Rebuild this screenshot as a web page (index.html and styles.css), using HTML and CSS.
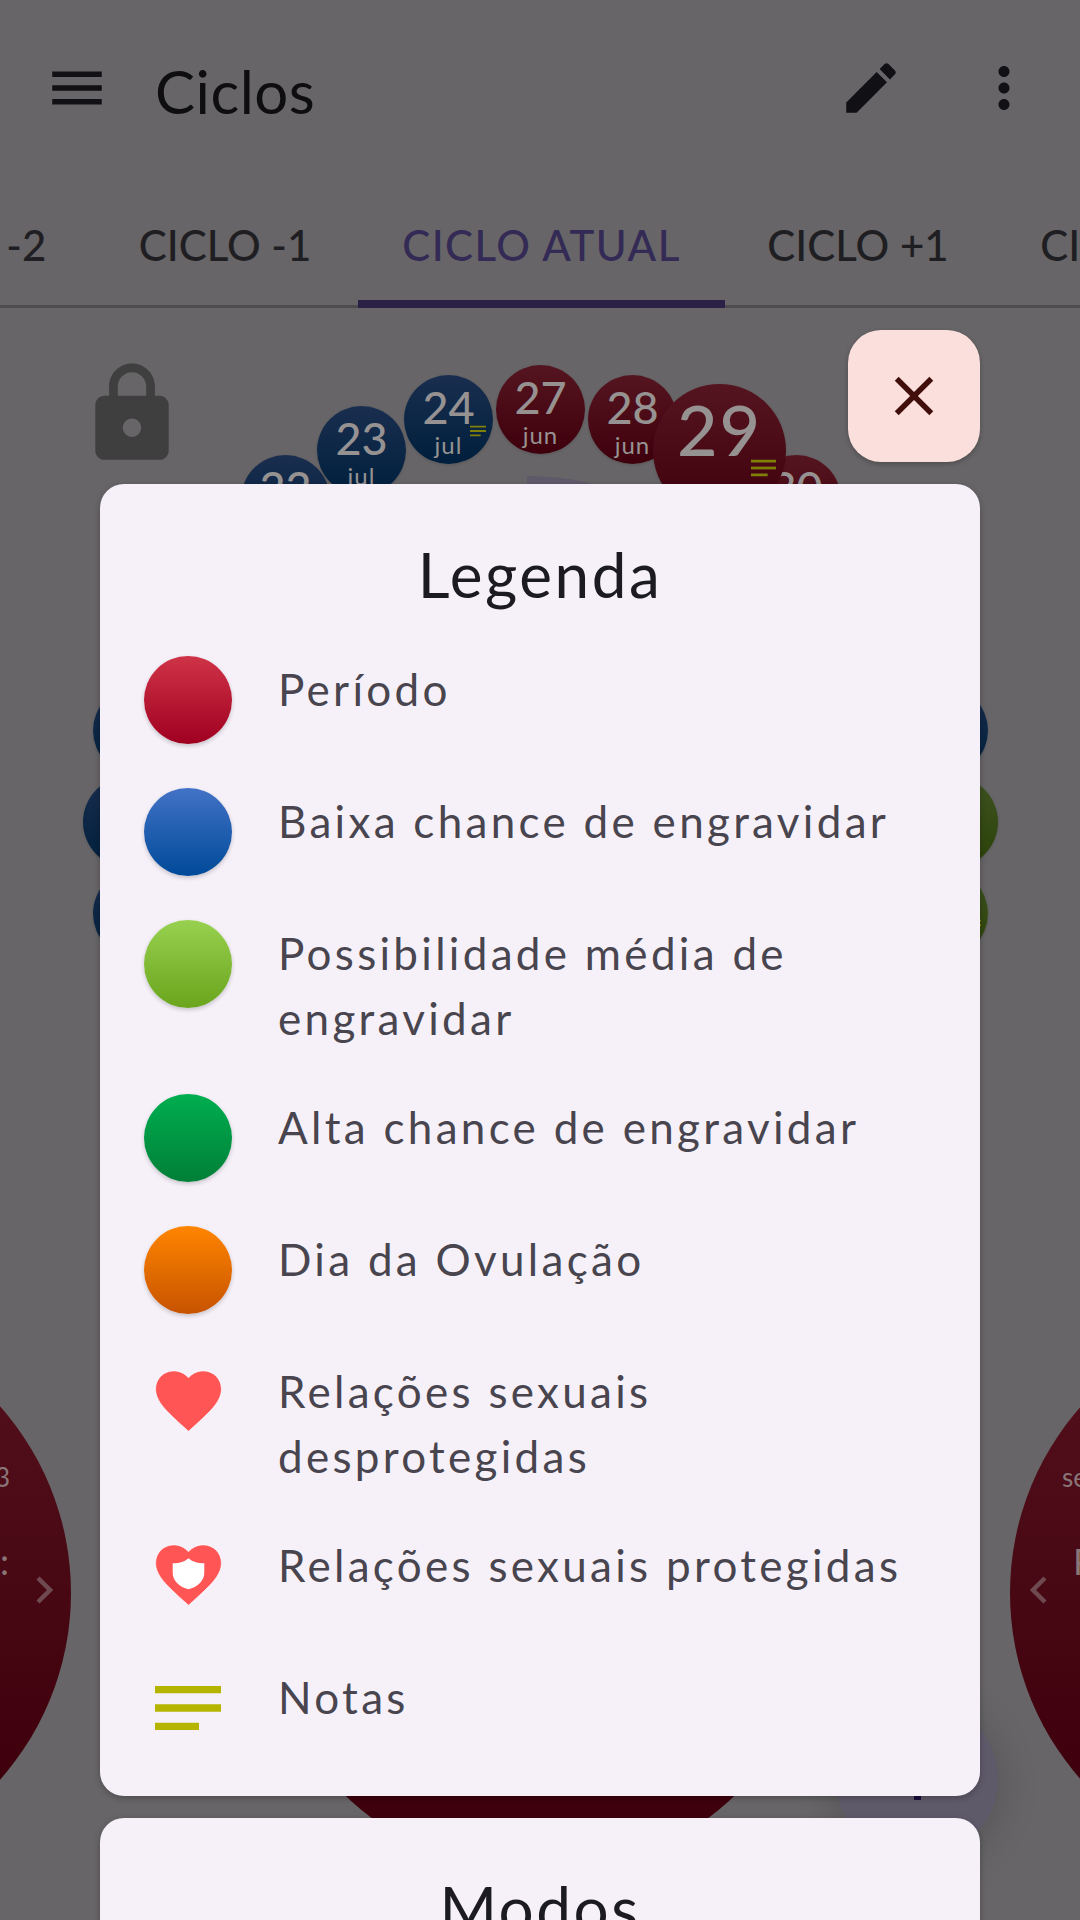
FILE: index.html
```html
<!DOCTYPE html>
<html lang="pt">

<head>
    <meta charset="UTF-8" />
    <title>Ciclos</title>
    <link rel="stylesheet" href="styles.css">
</head>

<body>
    <div class="screen">

        <!-- barra superior -->
        <header class="appbar">
            <svg class="icon menu-icon" viewBox="0 0 24 24"><path d="M3 18h18v-2H3v2zm0-5h18v-2H3v2zm0-7v2h18V6H3z"/></svg>
            <h1 class="title">Ciclos</h1>
            <svg class="icon edit-icon" viewBox="0 0 24 24"><path d="M3 17.25V21h3.75L17.81 9.94l-3.75-3.75L3 17.25zM20.71 7.04c.39-.39.39-1.02 0-1.41l-2.34-2.34c-.39-.39-1.02-.39-1.41 0l-1.83 1.83 3.75 3.75 1.83-1.83z"/></svg>
            <svg class="icon more-icon" viewBox="0 0 24 24"><path d="M12 8c1.1 0 2-.9 2-2s-.9-2-2-2-2 .9-2 2 .9 2 2 2zm0 2c-1.1 0-2 .9-2 2s.9 2 2 2 2-.9 2-2-.9-2-2-2zm0 6c-1.1 0-2 .9-2 2s.9 2 2 2 2-.9 2-2-.9-2-2-2z"/></svg>
        </header>

        <!-- abas -->
        <nav class="tabs">
            <div class="tab">CICLO -2</div>
            <div class="tab">CICLO -1</div>
            <div class="tab tab-active">CICLO ATUAL</div>
            <div class="tab">CICLO +1</div>
            <div class="tab tab-last">CICLO +2</div>
        </nav>

        <!-- conteudo atras do modal -->
        <div class="wheel">
            <svg class="lock-icon" viewBox="0 0 24 24"><path d="M18 8h-1V6c0-2.76-2.24-5-5-5S7 3.24 7 6v2H6c-1.1 0-2 .9-2 2v10c0 1.1.9 2 2 2h12c1.1 0 2-.9 2-2V10c0-1.1-.9-2-2-2zm-6 9c-1.1 0-2-.9-2-2s.9-2 2-2 2 .9 2 2-.9 2-2 2zm3.1-9H8.9V6c0-1.71 1.39-3.1 3.1-3.1 1.71 0 3.1 1.39 3.1 3.1v2z"/></svg>

            <div class="inner-arc"></div>

            <div class="day blue" style="left: 241px; top: 455px;"><b>22</b><span>jul</span></div>
            <div class="day blue" style="left: 317px; top: 406px;"><b>23</b><span>jul</span></div>
            <div class="day blue" style="left: 404px; top: 375px;"><b>24</b><span>jul</span>
                <svg class="day-note" viewBox="3 6 18 12"><path d="M3 18h12v-2H3v2zM3 6v2h18V6H3zm0 7h18v-2H3v2z"/></svg>
            </div>
            <div class="day red" style="left: 496px; top: 365px;"><b>27</b><span>jun</span></div>
            <div class="day red" style="left: 588px; top: 375px;"><b>28</b><span>jun</span></div>
            <div class="day red" style="left: 752px; top: 455px;"><b>30</b><span>jun</span></div>
            <div class="day day-big red" style="left: 653px; top: 384px;"><b>29</b><span>jun</span>
                <svg class="day-note" viewBox="3 6 18 12"><path d="M3 18h12v-2H3v2zM3 6v2h18V6H3z"/><path d="M3 13h18v-2H3v2z"/></svg>
            </div>

            <div class="day blue" style="left: 93px; top: 686px;"></div>
            <div class="day day-mid blue" style="left: 83px; top: 776px;"></div>
            <div class="day blue" style="left: 93px; top: 869px;"></div>
            <div class="day blue" style="left: 899px; top: 686px;"></div>
            <div class="day day-mid green" style="left: 906px; top: 776px;"></div>
            <div class="day green" style="left: 899px; top: 869px;">
                <svg class="day-note" viewBox="3 6 18 12"><path d="M3 18h12v-2H3v2zM3 6v2h18V6H3zm0 7h18v-2H3v2z"/></svg>
            </div>

            <div class="big-circle side-left">
                <span class="side-year">3</span>
                <span class="side-label">:</span>
                <svg class="side-arrow" viewBox="0 0 17 28"><path d="M2 2l12 12L2 26" /></svg>
            </div>
            <div class="big-circle side-right">
                <span class="side-year">se</span>
                <span class="side-label">P</span>
                <svg class="side-arrow" viewBox="0 0 17 28"><path d="M15 2L3 14l12 12" /></svg>
            </div>
            <div class="big-circle main-circle"></div>
            <div class="fab-back"><i></i></div>
        </div>

        <!-- modal legenda -->
        <div class="modal">
            <button class="close-btn">
                <svg class="icon" viewBox="0 0 24 24"><path d="M19 6.41L17.59 5 12 10.59 6.41 5 5 6.41 10.59 12 5 17.59 6.41 19 12 13.41 17.59 19 19 17.59 13.41 12z"/></svg>
            </button>

            <section class="card">
                <h2>Legenda</h2>
                <ul class="legend">
                    <li><span class="dot dot-period"></span><p>Período</p></li>
                    <li><span class="dot dot-low"></span><p>Baixa chance de engravidar</p></li>
                    <li><span class="dot dot-medium"></span><p>Possibilidade média de engravidar</p></li>
                    <li><span class="dot dot-high"></span><p>Alta chance de engravidar</p></li>
                    <li><span class="dot dot-ovulation"></span><p>Dia da Ovulação</p></li>
                    <li>
                        <span class="dot"><svg class="heart" viewBox="0 0 24 24"><path d="M12 21.35l-1.45-1.32C5.4 15.36 2 12.28 2 8.5 2 5.42 4.42 3 7.5 3c1.74 0 3.41.81 4.5 2.09C13.09 3.81 14.76 3 16.5 3 19.58 3 22 5.42 22 8.5c0 3.78-3.4 6.86-8.55 11.54L12 21.35z"/></svg></span>
                        <p>Relações sexuais desprotegidas</p>
                    </li>
                    <li>
                        <span class="dot"><svg class="heart" viewBox="0 0 24 24"><path d="M12 21.35l-1.45-1.32C5.4 15.36 2 12.28 2 8.5 2 5.42 4.42 3 7.5 3c1.74 0 3.41.81 4.5 2.09C13.09 3.81 14.76 3 16.5 3 19.58 3 22 5.42 22 8.5c0 3.78-3.4 6.86-8.55 11.54L12 21.35z"/><path class="shield" d="M12 7.1C10.8 8.2 8.9 8.7 7.2 8.6v2.9c0 2.5 2.1 4.4 4.8 5 2.7-.6 4.8-2.5 4.8-5V8.6c-1.7.1-3.6-.4-4.8-1.5z"/></svg></span>
                        <p>Relações sexuais protegidas</p>
                    </li>
                    <li>
                        <span class="dot"><svg class="notes" viewBox="0 0 24 24"><path d="M3 18h12v-2H3v2zM3 6v2h18V6H3zm0 7h18v-2H3v2z"/></svg></span>
                        <p>Notas</p>
                    </li>
                </ul>
            </section>

            <section class="card">
                <h2>Modos</h2>
            </section>
        </div>

    </div>
</body>

</html>
```

FILE: styles.css
```css
* {
    box-sizing: border-box;
}

body {
    margin: 0;
    font-family: 'Lato', 'Noto Sans', sans-serif;
    background-color: #676567;
}

.screen {
    position: relative;
    width: 1080px;
    height: 1920px;
    overflow: hidden;
    background-color: #676567;
}

.icon {
    display: block;
    width: 66px;
    height: 66px;
    flex: none;
}

/* barra superior */
.appbar {
    display: flex;
    align-items: center;
    height: 176px;
    padding-left: 44px;
    color: #111014;
}

.appbar .icon {
    fill: #111014;
}

.title {
    flex: 1;
    margin: 6px 0 0 45px;
    font-size: 60px;
    font-weight: 400;
    line-height: 76px;
    letter-spacing: 0.5px;
    color: #0e0d10;
}

.edit-icon {
    margin-right: 67px;
}

.more-icon {
    margin-right: 43px;
}

/* abas */
.tabs {
    display: flex;
    height: 132px;
    margin-left: -172px;
    width: 1400px;
    border-bottom: 3px solid #4f4c50;
}

.tab {
    flex: none;
    width: 264px;
    height: 132px;
    padding-top: 44px;
    margin-right: 1px;
    text-align: center;
    font-size: 42px;
    font-weight: 500;
    line-height: 50px;
    color: #1f1e22;
}

.tab-active {
    width: 367px;
    letter-spacing: 1.5px;
    color: #332a55;
    border-bottom: 8px solid #2b2147;
}

.tab-last {
    width: 280px;
}

/* conteudo atras do modal */
.wheel {
    position: absolute;
    left: 0;
    top: 0;
    width: 1080px;
    height: 1920px;
}

.lock-icon {
    position: absolute;
    left: 77px;
    top: 359px;
    width: 110px;
    height: 110px;
    fill: #3f3f3f;
}

.inner-arc {
    position: absolute;
    left: 527px;
    top: 476px;
    width: 110px;
    height: 40px;
    background-color: #5f5a6a;
    border-top-right-radius: 100% 100%;
}

.day {
    position: absolute;
    display: flex;
    flex-direction: column;
    align-items: center;
    justify-content: center;
    width: 89px;
    height: 89px;
    padding-top: 4px;
    border-radius: 50%;
    color: #979292;
    box-shadow: 0 1px 3px rgba(0, 0, 0, 0.15);
}

.day b {
    font-size: 45px;
    font-weight: 500;
    line-height: 46px;
}

.day span {
    font-size: 24px;
    line-height: 30px;
    letter-spacing: 1px;
}

.day-mid {
    width: 92px;
    height: 92px;
}

.day-big {
    width: 133px;
    height: 133px;
    padding-top: 0;
}

.day-big b {
    font-size: 70px;
    line-height: 84px;
    letter-spacing: 2px;
}

.day-big span {
    margin-top: 14px;
}

.day-note {
    position: absolute;
    right: 7px;
    top: 50px;
    width: 16px;
    height: 12px;
    fill: #807f08;
}

.day-big .day-note {
    right: 10px;
    top: 75px;
    width: 25px;
    height: 18px;
}

.red {
    background: linear-gradient(#551520, #3e000c);
}

.blue {
    background: linear-gradient(#1a2e4f, #001f3d);
}

.green {
    background: linear-gradient(#3e5220, #2b4209);
}

.big-circle {
    position: absolute;
    top: 1312px;
    width: 562px;
    height: 562px;
    border-radius: 50%;
    background: linear-gradient(#54121e, #3e000c 85%);
    color: #8a7578;
}

.main-circle {
    left: 259px;
}

.side-left {
    left: -491px;
}

.side-right {
    left: 1010px;
}

.side-year {
    position: absolute;
    top: 150px;
    font-size: 26px;
    line-height: 30px;
}

.side-label {
    position: absolute;
    top: 229px;
    font-size: 36px;
    line-height: 40px;
}

.side-left .side-year {
    right: 61px;
}

.side-left .side-label {
    right: 62px;
}

.side-right .side-year {
    left: 52px;
}

.side-right .side-label {
    left: 63px;
}

.side-arrow {
    position: absolute;
    top: 264px;
    width: 17px;
    height: 28px;
    fill: none;
    stroke: #6e4a50;
    stroke-width: 4.5;
}

.side-left .side-arrow {
    right: 18px;
}

.side-right .side-arrow {
    left: 20px;
}

.fab-back {
    position: absolute;
    left: 836px;
    top: 1698px;
    width: 162px;
    height: 162px;
    border-radius: 50%;
    background-color: #5f5a6a;
    box-shadow: 0 6px 40px rgba(0, 0, 0, 0.18);
}

.fab-back i {
    position: absolute;
    left: 78px;
    top: 60px;
    width: 7px;
    height: 42px;
    background-color: #1a0e3a;
}

/* modal legenda */
.modal {
    position: absolute;
    left: 0;
    top: 0;
    display: flex;
    flex-direction: column;
    gap: 22px;
    width: 1080px;
    height: 1920px;
    padding: 330px 100px 0;
}

.close-btn {
    display: flex;
    align-items: center;
    justify-content: center;
    flex: none;
    align-self: flex-end;
    width: 132px;
    height: 132px;
    padding: 0;
    border: none;
    border-radius: 33px;
    background-color: #fbdfdc;
    fill: #410e0b;
    box-shadow: 0 2px 5px rgba(0, 0, 0, 0.25);
}

.card {
    flex: none;
    border-radius: 24px;
    background-color: #f6f1f9;
    box-shadow: 0 2px 6px rgba(0, 0, 0, 0.25);
}

.card h2 {
    margin: 0;
    padding: 52px 0 44px;
    text-align: center;
    font-size: 62px;
    font-weight: 400;
    line-height: 76px;
    letter-spacing: 2.5px;
    color: #1c1b1f;
}

.legend {
    display: flex;
    flex-direction: column;
    gap: 44px;
    margin: 0;
    padding: 0 44px 44px;
    list-style: none;
}

.legend li {
    display: flex;
    gap: 46px;
}

.legend p {
    margin: 1px 0 -1px;
    font-size: 44px;
    line-height: 65px;
    letter-spacing: 3.3px;
    color: #49454f;
}

.dot {
    display: flex;
    align-items: center;
    justify-content: center;
    flex: none;
    width: 88px;
    height: 88px;
    border-radius: 50%;
}

.dot-period,
.dot-low,
.dot-medium,
.dot-high,
.dot-ovulation {
    box-shadow: 0 2px 4px rgba(0, 0, 0, 0.2);
}

.dot-period {
    background: linear-gradient(#cf3347, #a00020);
}

.dot-low {
    background: linear-gradient(#4272c6, #004a99);
}

.dot-medium {
    background: linear-gradient(#98d14f, #6aa51d);
}

.dot-high {
    background: linear-gradient(#00ae4f, #007f38);
}

.dot-ovulation {
    background: linear-gradient(#ff8500, #c75300);
}

.heart {
    flex: none;
    width: 79px;
    height: 79px;
    margin-bottom: 3px;
    fill: #ff5555;
    stroke: #ffffff;
    stroke-width: 0.2;
}

.shield {
    fill: #ffffff;
    stroke: none;
}

.notes {
    flex: none;
    width: 88px;
    height: 88px;
    fill: #b5b500;
}
```
